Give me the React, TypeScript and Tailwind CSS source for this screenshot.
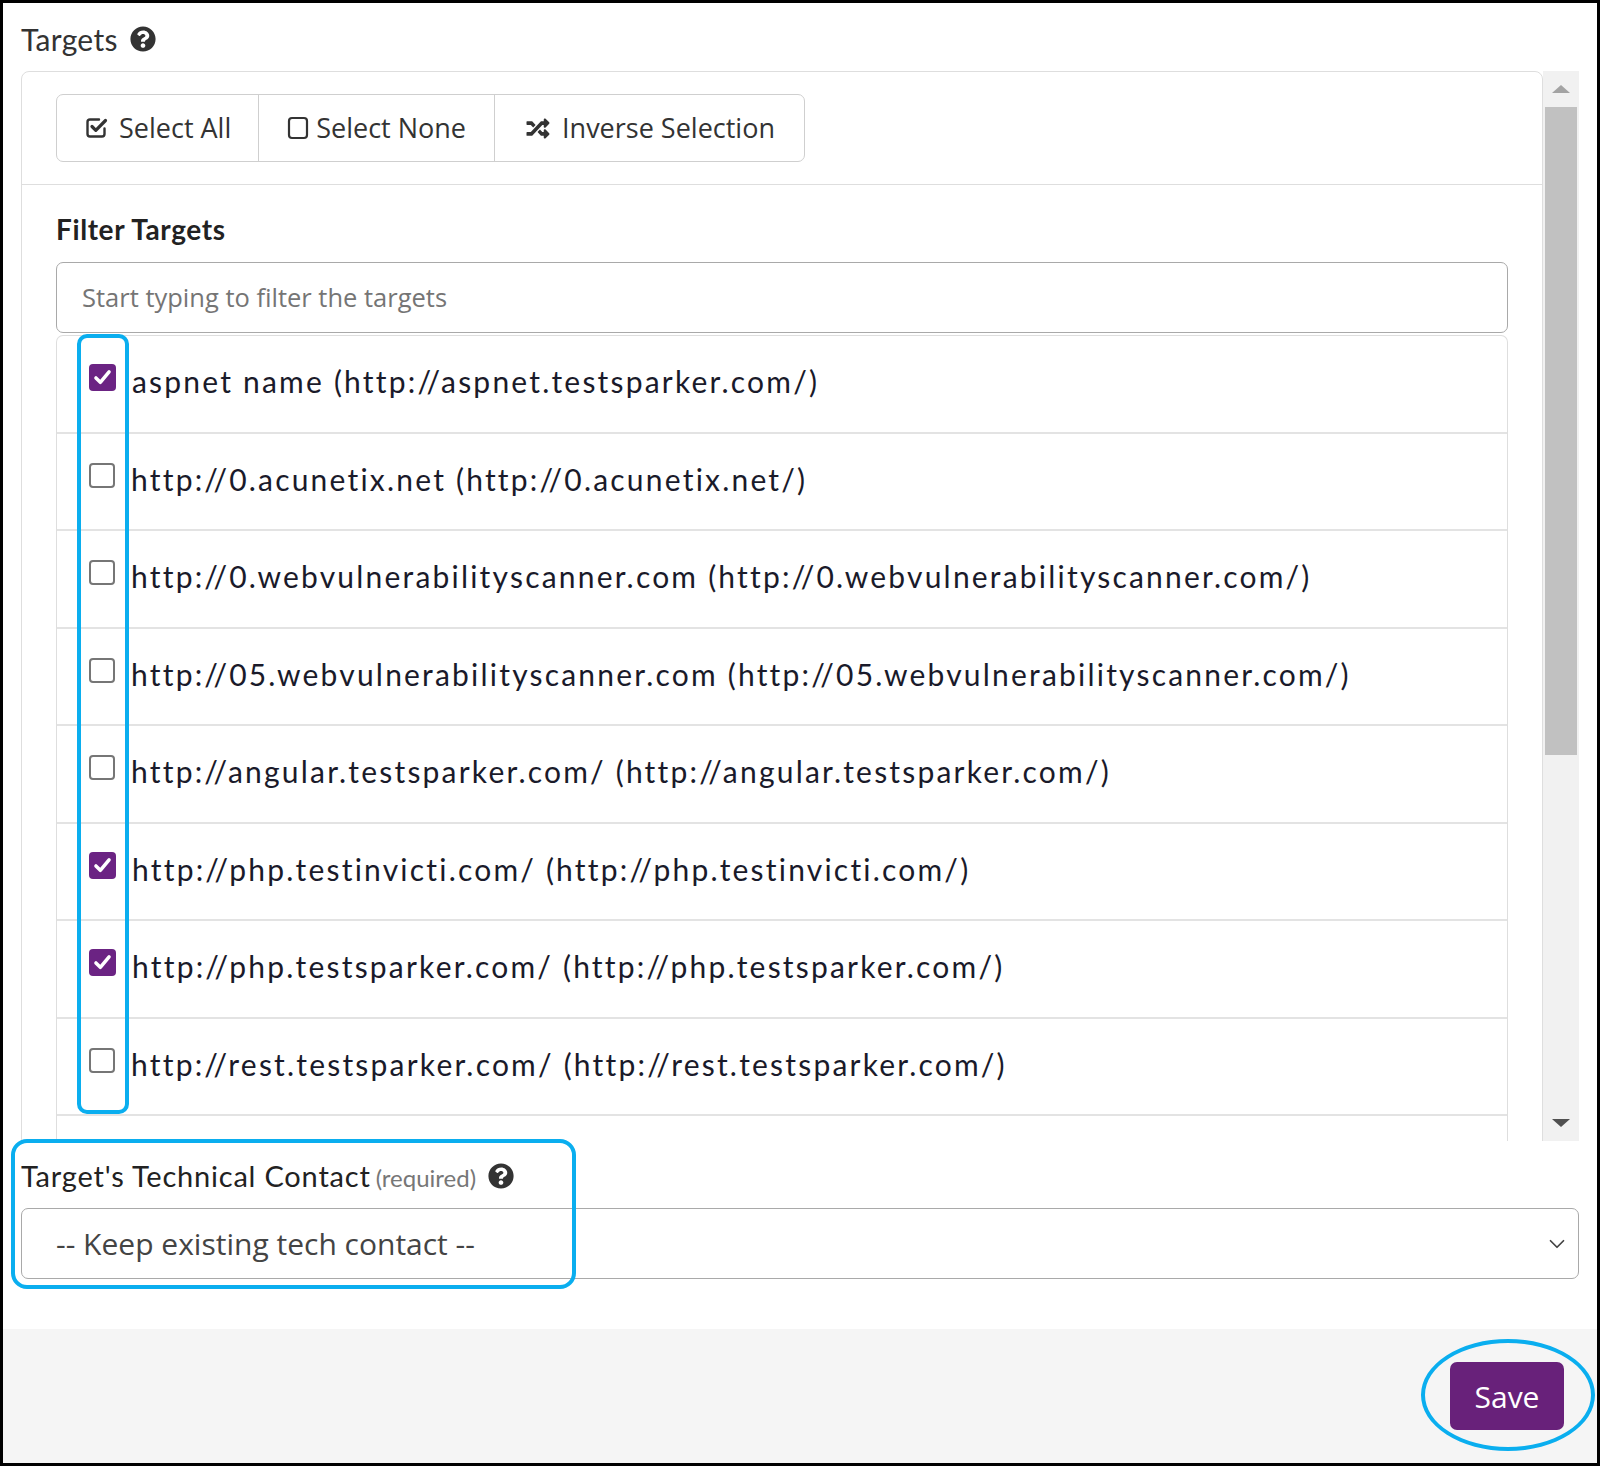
import React from "react";
import { FaQuestionCircle, FaRandom } from "react-icons/fa";
import { ChevronDown } from "lucide-react";

type Target = { name: string; url: string; checked: boolean };

const targets: Target[] = [
  { name: "aspnet name", url: "http://aspnet.testsparker.com/", checked: true },
  { name: "http://0.acunetix.net", url: "http://0.acunetix.net/", checked: false },
  { name: "http://0.webvulnerabilityscanner.com", url: "http://0.webvulnerabilityscanner.com/", checked: false },
  { name: "http://05.webvulnerabilityscanner.com", url: "http://05.webvulnerabilityscanner.com/", checked: false },
  { name: "http://angular.testsparker.com/", url: "http://angular.testsparker.com/", checked: false },
  { name: "http://php.testinvicti.com/", url: "http://php.testinvicti.com/", checked: true },
  { name: "http://php.testsparker.com/", url: "http://php.testsparker.com/", checked: true },
  { name: "http://rest.testsparker.com/", url: "http://rest.testsparker.com/", checked: false },
];

const CheckSquareIcon = () => (
  <svg width="24" height="24" viewBox="0 0 24 24" fill="none" stroke="#333" strokeLinecap="round" strokeLinejoin="round">
    <path d="M15 3.5H6a2.5 2.5 0 0 0-2.5 2.5v12A2.5 2.5 0 0 0 6 20.5h12a2.5 2.5 0 0 0 2.5-2.5v-5.5" strokeWidth="2.4" />
    <path d="M8 10.5l3.8 3.8L21.5 4.5" strokeWidth="3.2" />
  </svg>
);

const SquareIcon = () => (
  <svg width="22" height="24" viewBox="0 0 22 24" fill="none" stroke="#333" strokeWidth="2.2">
    <rect x="2" y="2" width="18" height="20" rx="3" />
  </svg>
);

const Checkbox = ({ checked }: { checked: boolean }) =>
  checked ? (
    <div className="w-[27px] h-[27px] shrink-0 rounded-[4px] bg-[#6b2383] flex items-center justify-center">
      <svg width="21" height="21" viewBox="0 0 24 24" fill="none" stroke="#fff" strokeWidth="4" strokeLinecap="round" strokeLinejoin="round">
        <path d="M4.5 12.5l5 5L19.5 5.5" />
      </svg>
    </div>
  ) : (
    <div className="w-[26px] h-[25px] shrink-0 rounded-[4px] border-2 border-[#767676] bg-white mt-[1px]" />
  );

export default function App() {
  return (
    <div className="relative w-[1600px] h-[1466px] border-[3px] border-black bg-white flex flex-col overflow-hidden font-['Lato',sans-serif]">
      <div className="flex-1 px-[18px] pt-[18px]">
        <div className="h-[36px] flex items-center gap-[12px] text-[30px] tracking-[0.3px] text-[#333]">
          <span>Targets</span>
          <FaQuestionCircle className="text-[#333] w-[26px] h-[26px]" />
        </div>

        <div className="mt-[14px] h-[1070px] flex">
          <div className="flex-1 overflow-hidden">
            <div className="border border-[#dedede] rounded-t-[8px] h-[1200px]">
              <div className="px-[34px] py-[22px] border-b border-[#dedede]">
                <div className="inline-flex h-[68px] border border-[#cfcfcf] rounded-[7px] font-['Open_Sans',sans-serif] text-[27px] text-[#333]">
                  <div className="flex items-center gap-[11px] px-[27px]">
                    <CheckSquareIcon />
                    <span>Select All</span>
                  </div>
                  <div className="flex items-center gap-[7px] px-[28px] border-l border-[#cfcfcf]">
                    <SquareIcon />
                    <span>Select None</span>
                  </div>
                  <div className="flex items-center gap-[10px] px-[29px] border-l border-[#cfcfcf]">
                    <FaRandom className="w-[28px] h-[23px] text-[#333]" />
                    <span>Inverse Selection</span>
                  </div>
                </div>
              </div>

              <div className="px-[34px] pt-[26px]">
                <div className="h-[36px] flex items-center text-[28px] font-bold tracking-[0.6px] text-[#222]">Filter Targets</div>
                <div className="mt-[15px] h-[71px] border-[1.5px] border-[#a9a9a9] rounded-[7px] flex items-center px-[25px] font-['Open_Sans',sans-serif] text-[25.5px] text-[#757575]">
                  Start typing to filter the targets
                </div>
                <div className="mt-[2px] border-x border-t border-[#dedede] rounded-t-[7px]">
                  {targets.map((t) => (
                    <div key={t.name} className="h-[97.5px] border-b-2 border-[#e3e3e3] flex items-start pt-[28px] pl-[32px] gap-[16px]">
                      <Checkbox checked={t.checked} />
                      <span className="-mt-[3px] leading-[40px] text-[30px] tracking-[2.2px] text-[#1a1a2a] whitespace-nowrap">
                        {t.name} ({t.url})
                      </span>
                    </div>
                  ))}
                  <div className="h-[97.5px]" />
                </div>
              </div>
            </div>
          </div>

          <div className="w-[36px] bg-[#f1f1f1] flex flex-col items-center">
            <div className="h-[36px] flex items-center justify-center">
              <div className="w-0 h-0 border-x-[9px] border-x-transparent border-b-[8px] border-b-[#a3a3a3]" />
            </div>
            <div className="w-[32px] h-[648px] bg-[#c1c1c1]" />
            <div className="flex-1" />
            <div className="h-[36px] flex items-center justify-center">
              <div className="w-0 h-0 border-x-[9px] border-x-transparent border-t-[8px] border-t-[#505050]" />
            </div>
          </div>
        </div>

        <div className="mt-[17px] h-[36px] flex items-center text-[#222]">
          <span className="text-[29px] tracking-[0.8px]">Target's Technical Contact</span>
          <span className="ml-[5px] mt-[4px] text-[24px] text-[#777]">(required)</span>
          <FaQuestionCircle className="ml-[12px] text-[#333] w-[26px] h-[26px]" />
        </div>
        <div className="mt-[14px] h-[71px] border-[1.5px] border-[#a9a9a9] rounded-[7px] flex items-center justify-between pl-[34px] pr-[8px] font-['Open_Sans',sans-serif] text-[30px] text-[#444]">
          <span>-- Keep existing tech contact --</span>
          <ChevronDown className="w-[26px] h-[26px] text-[#444]" strokeWidth={1.6} />
        </div>
      </div>

      <div className="h-[134px] bg-[#f5f5f5] flex justify-end items-start pt-[33px] pr-[33px]">
        <button className="w-[114px] h-[68px] bg-[#68217a] rounded-[7px] text-white text-[30px] font-['Open_Sans',sans-serif]">
          Save
        </button>
      </div>

      <div className="absolute left-[74px] top-[331px] w-[52px] h-[780px] border-[4px] border-[#0aaeef] rounded-[10px] pointer-events-none" />
      <div className="absolute left-[8px] top-[1136px] w-[565px] h-[150px] border-[4px] border-[#0aaeef] rounded-[16px] pointer-events-none" />
      <div className="absolute left-[1418px] top-[1336px] w-[174px] h-[112px] border-[4px] border-[#0aaeef] rounded-[50%] pointer-events-none" />
    </div>
  );
}
